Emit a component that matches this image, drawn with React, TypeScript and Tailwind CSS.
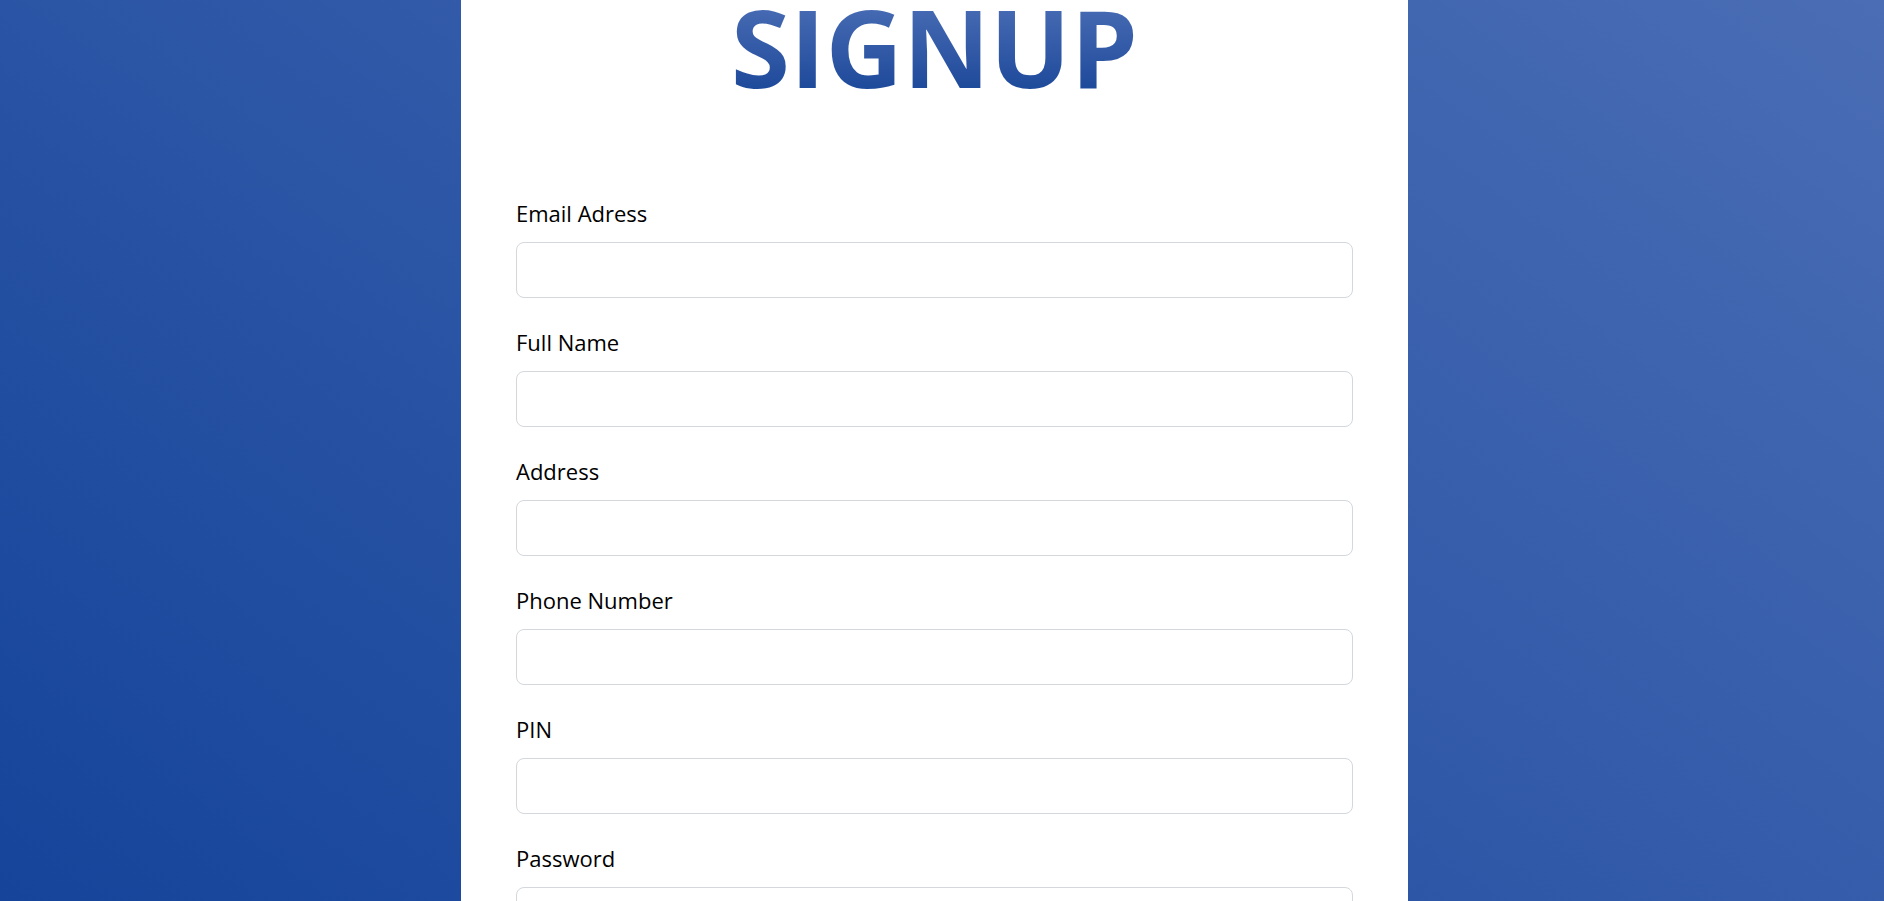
import React from "react";

const fields = [
  { label: "Email Adress", type: "email" },
  { label: "Full Name", type: "text" },
  { label: "Address", type: "text" },
  { label: "Phone Number", type: "tel" },
  { label: "PIN", type: "password" },
  { label: "Password", type: "password" },
  { label: "Confirm Password", type: "password" },
];

const App = () => {
  return (
    <div className="min-h-screen flex justify-center pr-[15px] bg-fixed bg-[linear-gradient(36deg,#15449a,#4a6db5)] font-['Open_Sans',sans-serif]">
      <main className="w-[947px] bg-white px-[55px] pb-16">
        {/* Title */}
        <h1 className="text-center text-[107px] font-bold leading-[94px] bg-clip-text text-transparent bg-gradient-to-b from-[#4a6db5] to-[#1b4899]">
          SIGNUP
        </h1>

        {/* Form */}
        <form className="mt-[104px] flex flex-col gap-[29px]">
          {fields.map((field, index) => (
            <div key={index} className="flex flex-col">
              <label className="text-[22px] leading-[30px] text-black mb-[14px]">
                {field.label}
              </label>
              <input
                type={field.type}
                className="h-[56px] w-full rounded-lg border border-[#d4d7dc] px-4 text-[20px] outline-none"
              />
            </div>
          ))}
          <button
            type="submit"
            className="mt-4 h-[56px] rounded-lg bg-[#2a55a0] text-white text-[22px] font-semibold"
          >
            Sign Up
          </button>
        </form>
      </main>
    </div>
  );
};

export default App;
